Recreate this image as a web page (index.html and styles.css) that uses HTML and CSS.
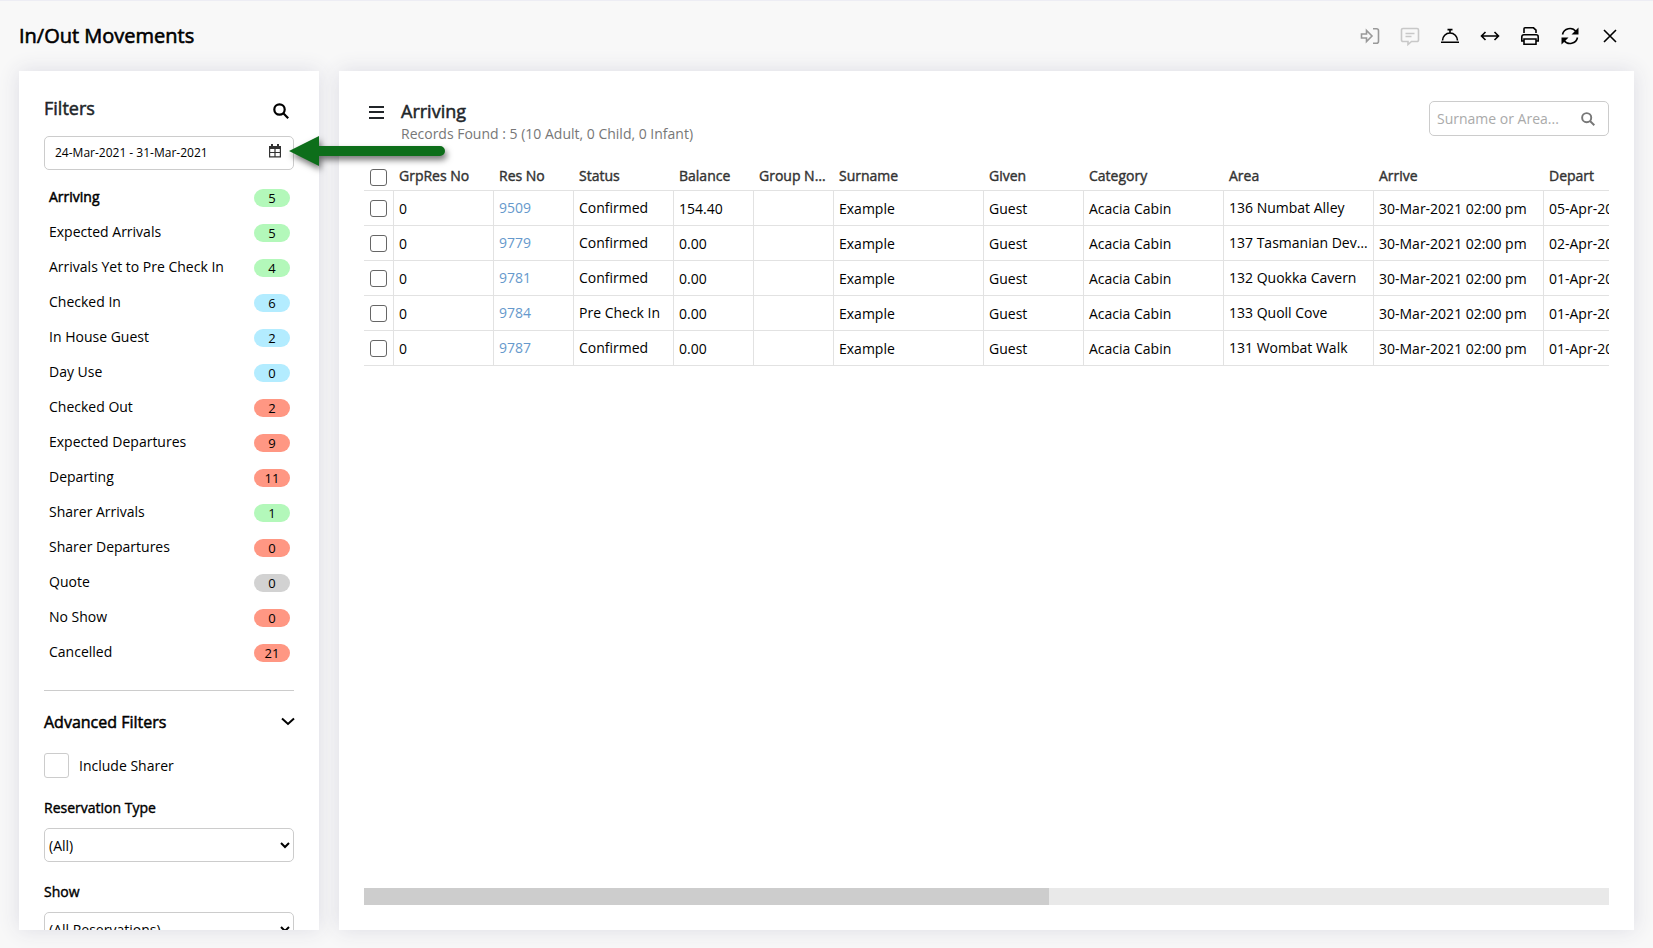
FILE: index.html
```html
<!DOCTYPE html>
<html lang="en">
<head>
<meta charset="utf-8">
<title>In/Out Movements</title>
<link rel="stylesheet" href="styles.css">
</head>
<body>
<header class="topbar">
  <h1 class="title">In/Out Movements</h1>
  <div class="tools">
    <button class="tool tool-in" aria-label="Check in" disabled><svg width="20" height="20" viewBox="0 0 20 20"><path d="M1.500 8v4h5v3.500l5.500-5.500-5.500-5.500V8z"/><path d="M13 2.800h3.500a2 2 0 0 1 2 2v10.400a2 2 0 0 1-2 2H13"/></svg></button>
    <button class="tool tool-note" aria-label="Notes" disabled><svg width="20" height="20" viewBox="0 0 20 20"><path d="M3 2.500h14a1.500 1.500 0 0 1 1.500 1.500v10a1.500 1.500 0 0 1-1.500 1.500h-5.500L8 18.500v-3H3A1.500 1.500 0 0 1 1.500 14V4A1.500 1.500 0 0 1 3 2.500z"/><path d="M5.500 7.500h9M5.500 10.500h6"/></svg></button>
    <button class="tool" aria-label="Concierge"><svg width="20" height="20" viewBox="0 0 20 20"><path d="M1 16.200h18M2.500 14.500a7.500 7.500 0 0 1 15 0M10 7V4M7.500 3.600h5"/></svg></button>
    <button class="tool" aria-label="Fit width"><svg width="20" height="20" viewBox="0 0 20 20"><path d="M1.500 10h17M5.500 6l-4 4 4 4M14.500 6l4 4-4 4"/></svg></button>
    <button class="tool" aria-label="Print"><svg width="20" height="20" viewBox="0 0 20 20"><path d="M4 7V2.800A1 1 0 0 1 5 1.800h8.500L16 4.200V7M4 15H1.800V10.800A2 2 0 0 1 3.800 8.800h12.400a2 2 0 0 1 2 2V15H16M4 13h12v5.200H4z"/></svg></button>
    <button class="tool" aria-label="Refresh"><svg width="20" height="20" viewBox="0 0 20 20"><path d="M2.500 8.500a7.600 7.600 0 0 1 13.500-3M17.500 11.500a7.600 7.600 0 0 1-13.500 3"/><path class="solid" d="M18.500 1.500v7H11.500zM1.500 18.500v-7H8.500z"/></svg></button>
    <button class="tool" aria-label="Close"><svg width="20" height="20" viewBox="0 0 20 20"><path d="M4 4l12 12M16 4L4 16"/></svg></button>
  </div>
</header>
<div class="layout">
  <aside class="panel sidebar">
    <div class="side-head">
      <h2 class="heading">Filters</h2>
      <button class="icon-button" aria-label="Search"><svg width="16" height="16" viewBox="0 0 16 16"><circle class="bold-line" cx="6.500" cy="6.500" r="5.200"/><path class="bold-line" d="M10.300 10.300l4.900 4.900"/></svg></button>
    </div>
    <div class="field date-field">
      <input class="date-input" type="text" aria-label="Date range" value="24-Mar-2021 - 31-Mar-2021">
      <svg class="calendar" width="14" height="14" viewBox="0 0 14 14"><path class="solid" d="M1 2h12v3H1zM3 0h2v3H3zM9 0h2v3H9z"/><path d="M1.600 2.500h10.800v10.300H1.600zM7 5v8M1.500 8.500h11"/></svg>
    </div>
    <ul class="filters">
      <li class="filter active"><a href="#">Arriving</a><span class="badge green">5</span></li>
      <li class="filter"><a href="#">Expected Arrivals</a><span class="badge green">5</span></li>
      <li class="filter"><a href="#">Arrivals Yet to Pre Check In</a><span class="badge green">4</span></li>
      <li class="filter"><a href="#">Checked In</a><span class="badge blue">6</span></li>
      <li class="filter"><a href="#">In House Guest</a><span class="badge blue">2</span></li>
      <li class="filter"><a href="#">Day Use</a><span class="badge blue">0</span></li>
      <li class="filter"><a href="#">Checked Out</a><span class="badge red">2</span></li>
      <li class="filter"><a href="#">Expected Departures</a><span class="badge red">9</span></li>
      <li class="filter"><a href="#">Departing</a><span class="badge red">11</span></li>
      <li class="filter"><a href="#">Sharer Arrivals</a><span class="badge green">1</span></li>
      <li class="filter"><a href="#">Sharer Departures</a><span class="badge red">0</span></li>
      <li class="filter"><a href="#">Quote</a><span class="badge gray">0</span></li>
      <li class="filter"><a href="#">No Show</a><span class="badge red">0</span></li>
      <li class="filter"><a href="#">Cancelled</a><span class="badge red">21</span></li>
    </ul>
    <div class="advanced">
      <div class="advanced-head">
        <h3 class="subheading">Advanced Filters</h3>
        <button class="icon-button" aria-label="Collapse"><svg width="14" height="14" viewBox="0 0 14 14"><path class="chevron" d="M2 3.500L8 9l6-5.500"/></svg></button>
      </div>
      <label class="sharer"><input class="big-check" type="checkbox">Include Sharer</label>
      <label class="field-label" for="restype">Reservation Type</label>
      <select class="select" id="restype"><option>(All)</option></select>
      <label class="field-label" for="show">Show</label>
      <select class="select" id="show"><option>(All Reservations)</option></select>
    </div>
  </aside>
  <main class="panel content">
    <div class="content-head">
      <button class="menu" aria-label="Menu"><svg width="15" height="14" viewBox="0 0 15 14"><path d="M0 2h15M0 7h15M0 13h15"/></svg></button>
      <div class="summary">
        <h2 class="heading">Arriving</h2>
        <p class="records">Records Found : 5 (10 Adult, 0 Child, 0 Infant)</p>
      </div>
      <div class="field search-field">
        <input class="search-input" type="text" aria-label="Surname or Area" placeholder="Surname or Area...">
        <svg class="glass" width="14" height="14" viewBox="0 0 16 16"><circle class="bold-line" cx="6.500" cy="6.500" r="5.200"/><path class="bold-line" d="M10.300 10.300l4.900 4.900"/></svg>
      </div>
    </div>
    <div class="table-wrap">
      <table class="grid">
        <colgroup><col class="w30"><col class="w100"><col class="w80"><col class="w100"><col class="w80"><col class="w80"><col class="w150"><col class="w100"><col class="w140"><col class="w150"><col class="w170"><col class="w170"></colgroup>
        <thead>
          <tr><th><input class="check" type="checkbox" aria-label="Select all"></th><th>GrpRes No</th><th>Res No</th><th>Status</th><th>Balance</th><th>Group Name</th><th>Surname</th><th>Given</th><th>Category</th><th>Area</th><th>Arrive</th><th>Depart</th></tr>
        </thead>
        <tbody>
          <tr><td><input class="check" type="checkbox" aria-label="Select 9509"></td><td>0</td><td class="up"><a href="#">9509</a></td><td class="up">Confirmed</td><td>154.40</td><td></td><td>Example</td><td>Guest</td><td>Acacia Cabin</td><td class="up">136 Numbat Alley</td><td>30-Mar-2021 02:00 pm</td><td>05-Apr-2021 10:00 am</td></tr>
          <tr><td><input class="check" type="checkbox" aria-label="Select 9779"></td><td>0</td><td class="up"><a href="#">9779</a></td><td class="up">Confirmed</td><td>0.00</td><td></td><td>Example</td><td>Guest</td><td>Acacia Cabin</td><td class="up">137 Tasmanian Devil Den</td><td>30-Mar-2021 02:00 pm</td><td>02-Apr-2021 10:00 am</td></tr>
          <tr><td><input class="check" type="checkbox" aria-label="Select 9781"></td><td>0</td><td class="up"><a href="#">9781</a></td><td class="up">Confirmed</td><td>0.00</td><td></td><td>Example</td><td>Guest</td><td>Acacia Cabin</td><td class="up">132 Quokka Cavern</td><td>30-Mar-2021 02:00 pm</td><td>01-Apr-2021 10:00 am</td></tr>
          <tr><td><input class="check" type="checkbox" aria-label="Select 9784"></td><td>0</td><td class="up"><a href="#">9784</a></td><td class="up">Pre Check In</td><td>0.00</td><td></td><td>Example</td><td>Guest</td><td>Acacia Cabin</td><td class="up">133 Quoll Cove</td><td>30-Mar-2021 02:00 pm</td><td>01-Apr-2021 10:00 am</td></tr>
          <tr><td><input class="check" type="checkbox" aria-label="Select 9787"></td><td>0</td><td class="up"><a href="#">9787</a></td><td class="up">Confirmed</td><td>0.00</td><td></td><td>Example</td><td>Guest</td><td>Acacia Cabin</td><td class="up">131 Wombat Walk</td><td>30-Mar-2021 02:00 pm</td><td>01-Apr-2021 10:00 am</td></tr>
        </tbody>
      </table>
    </div>
    <div class="scrollbar"><div class="thumb"></div></div>
  </main>
</div>
<svg class="arrow" width="170" height="44" viewBox="0 0 170 44"><path d="M2 17L32 2v10h121a5 5 0 0 1 0 10H32v10z"/></svg>
</body>
</html>
```
FILE: styles.css
```css
* { box-sizing: border-box; }
body {
  margin: 0;
  height: 100vh;
  display: flex;
  flex-direction: column;
  overflow: hidden;
  position: relative;
  border-top: 1px solid #ededf4;
  background: #f8f8f8;
  color: #000;
  font: 14px/20px "Open Sans", "Liberation Sans", sans-serif;
}
h1, h2, h3, p, ul { margin: 0; padding: 0; }
button { border: 0; padding: 0; background: none; color: inherit; display: flex; }
a { color: inherit; text-decoration: none; }
input, select { font: inherit; color: inherit; margin: 0; }
svg { fill: none; stroke: currentColor; stroke-width: 1.6; flex: none; overflow: visible; }
.solid { fill: currentColor; stroke: none; }
.bold-line { stroke-width: 2.2; }
.chevron { stroke-width: 2; }

.topbar {
  height: 70px;
  flex: none;
  display: flex;
  justify-content: space-between;
  align-items: center;
  padding: 0 33px 0 19px;
}
.title { font-size: 20px; line-height: 28px; font-weight: 400; -webkit-text-stroke: 0.6px; }
.tools { display: flex; align-items: center; gap: 20px; }
.tool-in { color: #999; }
.tool-note { color: #c8c8c8; }

.layout { flex: 1; min-height: 0; display: flex; gap: 20px; padding: 0 19px 18px; }
.panel { background: #fff; box-shadow: 0 0 20px #dcdce4; }
.sidebar { width: 300px; flex: none; overflow: hidden; padding: 25px; }
.side-head { display: flex; justify-content: space-between; align-items: center; height: 26px; padding-right: 5px; }
.side-head .heading { padding-bottom: 2px; }
.side-head .icon-button { padding-top: 4px; }
.heading { font-size: 18px; line-height: 24px; font-weight: 400; -webkit-text-stroke: 0.5px; color: #212529; }

.field { display: flex; align-items: center; border: 1px solid #ccc; border-radius: 5px; height: 34px; background: #fff; }
.field input { border: 0; outline: 0; background: none; flex: 1; min-width: 0; padding: 0; }
.date-field { margin-top: 14px; padding: 0 11px 0 10px; font-size: 12px; }
.calendar { color: #333; margin-bottom: 4px; stroke-width: 1.2; }

.filters { list-style: none; padding: 10px 4px 0 5px; }
.filter { height: 35px; display: flex; justify-content: space-between; align-items: center; }
.filter a { padding-bottom: 2px; }
.active a { -webkit-text-stroke: 0.5px; }
.badge { width: 36px; height: 18px; border-radius: 9px; font-size: 13px; line-height: 19px; text-align: center; }
.green { background: #b3f8ba; }
.blue { background: #b3ecff; }
.red { background: #ff9783; }
.gray { background: #d2d2d2; }

.advanced { margin-top: 20px; border-top: 1px solid #ccc; display: flex; flex-direction: column; }
.advanced-head { display: flex; justify-content: space-between; align-items: center; height: 62px; }
.subheading { font-size: 16px; line-height: 22px; font-weight: 400; -webkit-text-stroke: 0.5px; }
.sharer { display: flex; align-items: center; gap: 10px; }
.big-check { appearance: none; width: 25px; height: 25px; border: 1px solid #ccc; border-radius: 3px; }
.field-label { margin: 20px 0 10px; -webkit-text-stroke: 0.4px; }
.select { height: 34px; flex: none; border: 1px solid #ccc; border-radius: 5px; background: #fff; padding: 0; }

.content { flex: 1; min-width: 0; display: flex; flex-direction: column; padding: 25px; }
.content-head { display: flex; align-items: flex-start; padding: 3px 0 0 5px; }
.menu { padding-top: 6px; stroke-width: 2; color: #212529; }
.menu svg { stroke-width: 2; }
.summary { flex: 1; padding-left: 17px; }
.records { color: #777; line-height: 22px; }
.search-field { width: 180px; height: 35px; margin-top: 2px; padding: 0 13px 0 7px; }
.search-input::placeholder { color: #aaa; opacity: 1; }
.glass { color: #777; }

.table-wrap { overflow: hidden; flex: 1; padding-top: 16px; }
.grid { table-layout: fixed; width: 1350px; border-collapse: separate; border-spacing: 0; }
.grid th, .grid td {
  padding: 0 5px;
  border-bottom: 1px solid #e2e2e2;
  text-align: left;
  font-weight: 400;
  white-space: nowrap;
  overflow: hidden;
  text-overflow: ellipsis;
}
.grid th { height: 30px; color: #333; -webkit-text-stroke: 0.4px; }
.grid td { height: 35px; border-right: 1px solid #e2e2e2; padding-top: 2px; }
.grid td.up { padding-top: 0; }
.grid a { color: #6699cc; }
.grid th:first-child, .grid td:first-child { padding: 0 0 0 6px; text-overflow: clip; }
.grid th:first-child { padding-top: 3px; }
.check { appearance: none; display: block; width: 17px; height: 17px; border: 1px solid #666; border-radius: 3px; background: #fff; }
.w30 { width: 30px; }
.w80 { width: 80px; }
.w100 { width: 100px; }
.w140 { width: 140px; }
.w150 { width: 150px; }
.w170 { width: 170px; }
.scrollbar { height: 17px; background: #e9e9e9; flex: none; }
.thumb { width: 55%; height: 100%; background: #cdcdcd; }

.arrow { position: absolute; left: 287px; top: 133px; fill: #0d6e1a; stroke: none; filter: drop-shadow(2px 4px 3px #0008); }
```
